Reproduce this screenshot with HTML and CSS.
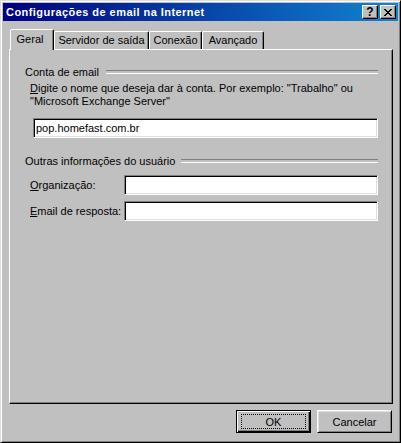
FILE: index.html
```html
<!DOCTYPE html>
<html>
<head>
    <title>Configurações de email na Internet</title>
    <link rel="stylesheet" href="styles.css">
</head>
<body>
    <div class="window">
        <div class="titlebar">
            <span class="title">Configurações de email na Internet</span>
            <div class="caption-buttons">
                <div class="cap-btn help">?</div>
                <div class="cap-btn close">
                    <svg width="8" height="7" viewBox="0 0 8 7">
                        <path d="M0 0h2v1h1v1h2v-1h1v-1h2v1h-1v1h-1v1h-1v1h1v1h1v1h1v1h-2v-1h-1v-1h-2v1h-1v1h-2v-1h1v-1h1v-1h1v-1h-1v-1h-1v-1h-1z" fill="#000"/>
                    </svg>
                </div>
            </div>
        </div>

        <div class="dialog">
            <div class="tabs">
                <div class="tab selected" style="width: 44px">Geral</div>
                <div class="tab" style="width: 95px">Servidor de saída</div>
                <div class="tab" style="width: 53px">Conexão</div>
                <div class="tab" style="width: 62px">Avançado</div>
            </div>

            <div class="panel">
                <div class="group-title">Conta de email</div>
                <p class="hint"><u>D</u>igite o nome que deseja dar à conta. Por exemplo: "Trabalho" ou<br>"Microsoft Exchange Server"</p>
                <div class="field wide">pop.homefast.com.br</div>

                <div class="group-title second">Outras informações do usuário</div>
                <div class="form-row">
                    <label><u>O</u>rganização:</label>
                    <div class="field"></div>
                </div>
                <div class="form-row">
                    <label><u>E</u>mail de resposta:</label>
                    <div class="field"></div>
                </div>
            </div>

            <div class="buttons">
                <div class="button default"><span class="focus">OK</span></div>
                <div class="button">Cancelar</div>
            </div>
        </div>
    </div>
</body>
</html>
```

FILE: styles.css
```css
:root {
    --face: #c0c0c0;
    --light: #dfdfdf;
    --shadow: #808080;
    --dark: #000000;
}

* {
    box-sizing: border-box;
}

body {
    margin: 0;
    background: var(--face);
    font-family: "Liberation Sans", Arial, sans-serif;
    font-size: 11px;
    color: #000;
}

.window {
    width: 401px;
    height: 443px;
    padding: 2px;
    background: var(--face);
    border: 1px solid;
    border-color: var(--light) var(--dark) var(--dark) var(--light);
    box-shadow: inset 1px 1px #fff, inset -1px -1px var(--shadow);
}

.titlebar {
    height: 18px;
    display: flex;
    align-items: center;
    justify-content: space-between;
    padding-left: 3px;
    background: linear-gradient(to right, #000080, #1084d0);
    color: #fff;
}

.title {
    font-weight: bold;
    font-size: 11px;
    letter-spacing: 0.45px;
}

.caption-buttons {
    display: flex;
    gap: 2px;
    margin-right: 2px;
}

.cap-btn {
    width: 16px;
    height: 14px;
    display: flex;
    align-items: center;
    justify-content: center;
    background: var(--face);
    border: 1px solid;
    border-color: #fff var(--dark) var(--dark) #fff;
    box-shadow: inset -1px -1px var(--shadow);
    color: #000;
}

.cap-btn.help {
    font-weight: bold;
    font-size: 12px;
    line-height: 1;
    padding-bottom: 1px;
}

.dialog {
    padding: 8px 5px 0 6px;
}

.tabs {
    display: flex;
    align-items: flex-end;
    height: 20px;
    padding-left: 1px;
    position: relative;
    z-index: 1;
}

.tab {
    height: 18px;
    display: flex;
    align-items: center;
    justify-content: center;
    border: 1px solid;
    border-bottom: none;
    border-color: #fff var(--dark) transparent #fff;
    border-radius: 2px 2px 0 0;
    box-shadow: inset -1px 0 var(--shadow);
    white-space: nowrap;
    padding-bottom: 1px;
}

.tab.selected {
    height: 21px;
    margin-bottom: -1px;
    background: var(--face);
    padding-right: 4px;
    padding-bottom: 2px;
}

.panel {
    height: 355px;
    border: 1px solid;
    border-color: #fff var(--dark) var(--dark) #fff;
    box-shadow: inset -1px -1px var(--shadow);
    padding: 15px 14px 0 15px;
}

.group-title {
    display: flex;
    align-items: center;
    height: 13px;
    white-space: nowrap;
}

.group-title::after {
    content: "";
    flex: 1;
    margin-left: 7px;
    height: 2px;
    border-top: 1px solid var(--shadow);
    border-bottom: 1px solid #fff;
}

.group-title.second {
    margin-top: 16px;
}

.group-title.second::after {
    margin-left: 6px;
}

.hint {
    margin: 4px 0 0 5px;
    line-height: 13px;
}

.field {
    height: 20px;
    background: #fff;
    border: 1px solid;
    border-color: var(--shadow) #fff #fff var(--shadow);
    box-shadow: inset 1px 1px var(--dark), inset -1px -1px var(--light);
    padding: 2px 0 0 2px;
    line-height: 14px;
}

.field.wide {
    margin: 10px 0 0 8px;
}

.form-row {
    display: flex;
    align-items: center;
    margin-top: 6px;
}

.group-title + .form-row {
    margin-top: 8px;
}

.form-row label {
    flex: none;
    width: 99px;
    padding-left: 5px;
    white-space: nowrap;
}

.form-row .field {
    flex: 1;
}

.buttons {
    display: flex;
    justify-content: flex-end;
    gap: 6px;
    margin-top: 6px;
    padding-right: 1px;
}

.button {
    width: 75px;
    height: 23px;
    display: flex;
    align-items: center;
    justify-content: center;
    background: var(--face);
    border: 1px solid;
    border-color: #fff var(--dark) var(--dark) #fff;
    box-shadow: inset 1px 1px var(--light), inset -1px -1px var(--shadow);
}

.button.default {
    border: 1px solid var(--dark);
    box-shadow: inset 1px 1px #fff, inset -1px -1px var(--dark), inset -2px -2px var(--shadow);
}

.focus {
    display: flex;
    align-items: center;
    justify-content: center;
    width: 65px;
    height: 15px;
    border: 1px dotted var(--dark);
}
```
